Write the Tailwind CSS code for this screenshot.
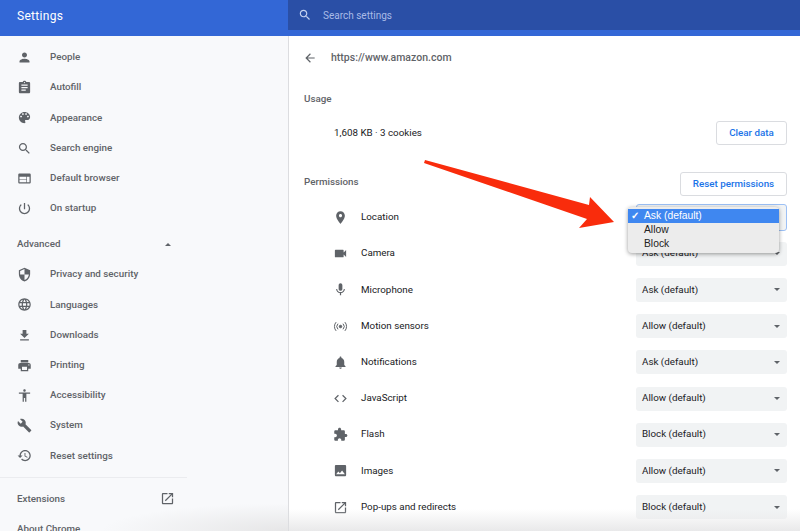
<!DOCTYPE html>
<html lang="en">
<head>
  <meta charset="UTF-8">
  <title>Settings</title>
  <script src="https://cdn.jsdelivr.net/npm/@tailwindcss/browser@4"></script>
</head>
<body class="bg-white font-['Roboto',sans-serif] text-[9.8px] text-[#3c4043] overflow-hidden">
  <div class="relative w-[800px] h-[531px] overflow-hidden flex flex-col">

    <!-- Top bar -->
    <header class="flex h-9 shrink-0 bg-[#3367d6]">
      <div class="w-[288px] pl-[17px] pb-[5px] flex items-center text-white text-[12px] tracking-[0.3px]">Settings</div>
      <div class="flex-1 h-[30px] bg-[#2a4fa6] flex items-center pl-[10px] text-[#a9bbe6]">
        <svg class="w-[14px] h-[14px] fill-[#c5d2f0]" viewBox="0 0 24 24"><path d="M15.5 14h-.79l-.28-.27C15.41 12.59 16 11.11 16 9.5 16 5.91 13.09 3 9.5 3S3 5.91 3 9.5 5.91 16 9.5 16c1.61 0 3.09-.59 4.23-1.57l.27.28v.79l5 4.99L20.49 19l-4.99-5zm-6 0C7.01 14 5 11.99 5 9.5S7.01 5 9.5 5 14 7.01 14 9.5 11.99 14 9.5 14z"/></svg>
        <span class="ml-[11px] text-[10px]">Search settings</span>
      </div>
    </header>

    <div class="flex flex-1 min-h-0">
      <!-- Sidebar -->
      <nav class="w-[289px] shrink-0 bg-[#f8f9fb] border-r border-[#dcdde0] pt-[6.5px] text-[#5f6368] font-medium overflow-hidden">
        <div class="w-[187px]">
          <a class="h-[30.2px] flex items-center"><svg class="w-[15px] h-[15px] ml-[17px] mr-[18px] fill-[#5f6368]" viewBox="0 0 24 24"><path d="M12 12c2.21 0 4-1.79 4-4s-1.79-4-4-4-4 1.79-4 4 1.79 4 4 4zm0 2c-2.67 0-8 1.34-8 4v2h16v-2c0-2.66-5.33-4-8-4z"/></svg>People</a>
          <a class="h-[30.2px] flex items-center"><svg class="w-[15px] h-[15px] ml-[17px] mr-[18px] fill-[#5f6368]" viewBox="0 0 24 24"><path d="M19 3h-4.18C14.4 1.84 13.3 1 12 1c-1.3 0-2.4.84-2.82 2H5c-1.1 0-2 .9-2 2v14c0 1.1.9 2 2 2h14c1.1 0 2-.9 2-2V5c0-1.1-.9-2-2-2zm-7 0c.55 0 1 .45 1 1s-.45 1-1 1-1-.45-1-1 .45-1 1-1zm2 14H7v-2h7v2zm3-4H7v-2h10v2zm0-4H7V7h10v2z"/></svg>Autofill</a>
          <a class="h-[30.2px] flex items-center"><svg class="w-[15px] h-[15px] ml-[17px] mr-[18px] fill-[#5f6368]" viewBox="0 0 24 24"><path d="M12 3c-4.97 0-9 4.03-9 9s4.03 9 9 9c.83 0 1.5-.67 1.5-1.5 0-.39-.15-.74-.39-1.01-.23-.26-.38-.61-.38-.99 0-.83.67-1.5 1.5-1.5H16c2.76 0 5-2.24 5-5 0-4.42-4.03-8-9-8zm-5.5 9c-.83 0-1.5-.67-1.5-1.5S5.67 9 6.5 9 8 9.67 8 10.5 7.33 12 6.5 12zm3-4C8.67 8 8 7.33 8 6.5S8.67 5 9.5 5s1.5.67 1.5 1.5S10.33 8 9.5 8zm5 0c-.83 0-1.5-.67-1.5-1.5S13.67 5 14.5 5s1.5.67 1.5 1.5S15.33 8 14.5 8zm3 4c-.83 0-1.5-.67-1.5-1.5S16.67 9 17.5 9s1.5.67 1.5 1.5-.67 1.5-1.5 1.5z"/></svg>Appearance</a>
          <a class="h-[30.2px] flex items-center"><svg class="w-[15px] h-[15px] ml-[17px] mr-[18px] fill-[#5f6368]" viewBox="0 0 24 24"><path d="M15.5 14h-.79l-.28-.27C15.41 12.59 16 11.11 16 9.5 16 5.91 13.09 3 9.5 3S3 5.91 3 9.5 5.91 16 9.5 16c1.61 0 3.09-.59 4.23-1.57l.27.28v.79l5 4.99L20.49 19l-4.99-5zm-6 0C7.01 14 5 11.99 5 9.5S7.01 5 9.5 5 14 7.01 14 9.5 11.99 14 9.5 14z"/></svg>Search engine</a>
          <a class="h-[30.2px] flex items-center"><svg class="w-[15px] h-[15px] ml-[17px] mr-[18px] fill-[#5f6368]" viewBox="0 0 24 24"><path d="M20 4H4c-1.1 0-1.99.9-1.99 2L2 18c0 1.1.9 2 2 2h16c1.1 0 2-.9 2-2V6c0-1.1-.9-2-2-2zm-5 14H4v-4h11v4zm0-5H4V9h11v4zm5 5h-4V9h4v9z"/></svg>Default browser</a>
          <a class="h-[30.2px] flex items-center"><svg class="w-[15px] h-[15px] ml-[17px] mr-[18px] fill-[#5f6368]" viewBox="0 0 24 24"><path d="M13 3h-2v10h2V3zm4.83 2.17l-1.42 1.42C17.99 7.86 19 9.81 19 12c0 3.87-3.13 7-7 7s-7-3.13-7-7c0-2.19 1.01-4.14 2.58-5.42L6.17 5.17C4.23 6.82 3 9.26 3 12c0 4.97 4.03 9 9 9s9-4.03 9-9c0-2.74-1.23-5.18-3.17-6.83z"/></svg>On startup</a>

          <div class="h-[30px] mt-[6px] pl-[17px] pr-[16px] flex items-center justify-between">
            <span>Advanced</span>
            <span class="w-0 h-0 border-x-[3px] border-x-transparent border-b-[3px] border-b-[#5f6368]"></span>
          </div>

          <a class="h-[30.2px] flex items-center"><svg class="w-[15px] h-[15px] ml-[17px] mr-[18px] fill-[#5f6368]" viewBox="0 0 24 24"><path d="M12 1L3 5v6c0 5.55 3.84 10.74 9 12 5.16-1.26 9-6.45 9-12V5l-9-4zm0 10.99h7c-.53 4.12-3.28 7.79-7 8.94V12H5V6.3l7-3.11v8.8z"/></svg>Privacy and security</a>
          <a class="h-[30.2px] flex items-center"><svg class="w-[15px] h-[15px] ml-[17px] mr-[18px] fill-[#5f6368]" viewBox="0 0 24 24"><path d="M11.99 2C6.47 2 2 6.48 2 12s4.47 10 9.99 10C17.52 22 22 17.52 22 12S17.52 2 11.99 2zm6.93 6h-2.95c-.32-1.25-.78-2.45-1.38-3.56 1.84.63 3.37 1.91 4.33 3.56zM12 4.04c.83 1.2 1.48 2.53 1.91 3.96h-3.82c.43-1.43 1.08-2.76 1.91-3.96zM4.26 14C4.1 13.36 4 12.69 4 12s.1-1.36.26-2h3.38c-.08.66-.14 1.32-.14 2 0 .68.06 1.34.14 2H4.26zm.82 2h2.95c.32 1.25.78 2.45 1.38 3.56-1.84-.63-3.37-1.9-4.33-3.56zm2.95-8H5.08c.96-1.66 2.49-2.93 4.33-3.56C8.81 5.55 8.35 6.75 8.03 8zM12 19.96c-.83-1.2-1.48-2.53-1.91-3.96h3.82c-.43 1.43-1.08 2.76-1.91 3.96zM14.34 14H9.66c-.09-.66-.16-1.32-.16-2 0-.68.07-1.35.16-2h4.68c.09.65.16 1.32.16 2 0 .68-.07 1.34-.16 2zm.25 5.56c.6-1.11 1.06-2.31 1.38-3.56h2.95c-.96 1.65-2.49 2.93-4.33 3.56zM16.36 14c.08-.66.14-1.32.14-2 0-.68-.06-1.34-.14-2h3.38c.16.64.26 1.31.26 2s-.1 1.36-.26 2h-3.38z"/></svg>Languages</a>
          <a class="h-[30.2px] flex items-center"><svg class="w-[15px] h-[15px] ml-[17px] mr-[18px] fill-[#5f6368]" viewBox="0 0 24 24"><path d="M19 9h-4V3H9v6H5l7 7 7-7zM5 18v2h14v-2H5z"/></svg>Downloads</a>
          <a class="h-[30.2px] flex items-center"><svg class="w-[15px] h-[15px] ml-[17px] mr-[18px] fill-[#5f6368]" viewBox="0 0 24 24"><path d="M19 8H5c-1.66 0-3 1.34-3 3v6h4v4h12v-4h4v-6c0-1.66-1.34-3-3-3zm-3 11H8v-5h8v5zm3-7c-.55 0-1-.45-1-1s.45-1 1-1 1 .45 1 1-.45 1-1 1zm-1-9H6v4h12V3z"/></svg>Printing</a>
          <a class="h-[30.2px] flex items-center"><svg class="w-[15px] h-[15px] ml-[17px] mr-[18px] fill-[#5f6368]" viewBox="0 0 24 24"><path d="M12 2c1.1 0 2 .9 2 2s-.9 2-2 2-2-.9-2-2 .9-2 2-2zm9 7h-6v13h-2v-6h-2v6H9V9H3V7h18v2z"/></svg>Accessibility</a>
          <a class="h-[30.2px] flex items-center"><svg class="w-[15px] h-[15px] ml-[17px] mr-[18px] fill-[#5f6368]" viewBox="0 0 24 24"><path d="M22.7 19l-9.1-9.1c.9-2.3.4-5-1.5-6.9-2-2-5-2.4-7.4-1.3L9 6 6 9 1.6 4.7C.4 7.1.9 10.1 2.9 12.1c1.9 1.9 4.6 2.4 6.9 1.5l9.1 9.1c.4.4 1 .4 1.4 0l2.3-2.3c.5-.4.5-1.1.1-1.4z"/></svg>System</a>
          <a class="h-[30.2px] flex items-center"><svg class="w-[15px] h-[15px] ml-[17px] mr-[18px] fill-[#5f6368]" viewBox="0 0 24 24"><path d="M13 3c-4.97 0-9 4.03-9 9H1l3.89 3.89.07.14L9 12H6c0-3.87 3.13-7 7-7s7 3.13 7 7-3.13 7-7 7c-1.93 0-3.68-.79-4.94-2.06l-1.42 1.42C8.27 19.99 10.51 21 13 21c4.97 0 9-4.03 9-9s-4.03-9-9-9zm-1 5v5l4.28 2.54.72-1.21-3.5-2.08V8H12z"/></svg>Reset settings</a>

          <div class="mt-[6px] border-t border-[#ebecef]"></div>
          <a class="h-[42px] pl-[17px] pr-[12px] flex items-center justify-between">Extensions
            <svg class="w-[15px] h-[15px] fill-[#5f6368]" viewBox="0 0 24 24"><path d="M19 19H5V5h7V3H5c-1.11 0-2 .9-2 2v14c0 1.1.89 2 2 2h14c1.1 0 2-.9 2-2v-7h-2v7zM14 3v2h3.59l-9.83 9.83 1.41 1.41L19 6.41V10h2V3h-7z"/></svg>
          </a>
          <a class="h-[18px] pl-[17px] flex items-center">About Chrome</a>
        </div>
      </nav>

      <!-- Site details -->
      <main class="flex-1 min-w-0 pl-[15px] pr-[13px]">
        <div class="h-[43px] flex items-center font-medium text-[#5f6368] text-[10.5px]">
          <svg class="w-[14px] h-[14px] -ml-px fill-[#5f6368]" viewBox="0 0 24 24"><path d="M20 11H7.83l5.59-5.59L12 4l-8 8 8 8 1.41-1.41L7.83 13H20v-2z"/></svg>
          <span class="ml-[14px]">https://www.amazon.com</span>
        </div>
        <div class="mt-[12px] h-4 flex items-center font-medium text-[#5f6368]">Usage</div>
        <div class="mt-[14px] h-6 flex items-center justify-between">
          <span class="ml-[30px] text-[#202124]">1,608 KB · 3 cookies</span>
          <button class="w-[71px] h-6 bg-white border border-[#dadce0] rounded-[3px] text-[#1a73e8] font-medium">Clear data</button>
        </div>
        <div class="mt-[27px] h-6 flex items-center justify-between">
          <span class="mb-[4px] font-medium text-[#5f6368]">Permissions</span>
          <button class="w-[107px] h-6 bg-white border border-[#dadce0] rounded-[3px] text-[#1a73e8] font-medium">Reset permissions</button>
        </div>

        <div class="mt-[3.5px] text-[#202124]">
          <div class="h-[36.2px] flex items-center justify-between">
            <span class="flex items-center"><svg class="w-[15px] h-[15px] ml-[29px] mr-[13px] fill-[#5f6368]" viewBox="0 0 24 24"><path d="M12 2C8.13 2 5 5.13 5 9c0 5.25 7 13 7 13s7-7.75 7-13c0-3.87-3.13-7-7-7zm0 9.5c-1.38 0-2.5-1.12-2.5-2.5s1.12-2.5 2.5-2.5 2.5 1.12 2.5 2.5-1.12 2.5-2.5 2.5z"/></svg>Location</span>
            <span class="w-[151px] h-[27px] pl-[6px] pr-[7px] bg-[#f1f3f4] border border-[#9cc0f5] rounded-[3px] flex items-center justify-between">Ask (default)<span class="w-0 h-0 border-x-[3px] border-x-transparent border-t-[3px] border-t-[#5f6368]"></span></span>
          </div>
          <div class="h-[36.2px] flex items-center justify-between">
            <span class="flex items-center"><svg class="w-[15px] h-[15px] ml-[29px] mr-[13px] fill-[#5f6368]" viewBox="0 0 24 24"><path d="M17 10.5V7c0-.55-.45-1-1-1H4c-.55 0-1 .45-1 1v10c0 .55.45 1 1 1h12c.55 0 1-.45 1-1v-3.5l4 4v-11l-4 4z"/></svg>Camera</span>
            <span class="w-[151px] h-6 pl-[6px] pr-[7px] bg-[#f1f3f4] rounded-[3px] flex items-center justify-between">Ask (default)<span class="w-0 h-0 border-x-[3px] border-x-transparent border-t-[3px] border-t-[#5f6368]"></span></span>
          </div>
          <div class="h-[36.2px] flex items-center justify-between">
            <span class="flex items-center"><svg class="w-[15px] h-[15px] ml-[29px] mr-[13px] fill-[#5f6368]" viewBox="0 0 24 24"><path d="M12 14c1.66 0 2.99-1.34 2.99-3L15 5c0-1.66-1.34-3-3-3S9 3.34 9 5v6c0 1.66 1.34 3 3 3zm5.3-3c0 3-2.54 5.1-5.3 5.1S6.7 14 6.7 11H5c0 3.41 2.72 6.23 6 6.72V21h2v-3.28c3.28-.48 6-3.3 6-6.72h-1.7z"/></svg>Microphone</span>
            <span class="w-[151px] h-6 pl-[6px] pr-[7px] bg-[#f1f3f4] rounded-[3px] flex items-center justify-between">Ask (default)<span class="w-0 h-0 border-x-[3px] border-x-transparent border-t-[3px] border-t-[#5f6368]"></span></span>
          </div>
          <div class="h-[36.2px] flex items-center justify-between">
            <span class="flex items-center"><svg class="w-[15px] h-[15px] ml-[29px] mr-[13px] fill-none stroke-[#5f6368] stroke-[1.6]" viewBox="0 0 24 24"><circle cx="12" cy="12" r="2" class="fill-[#5f6368]"/><path d="M8 7.5a6.5 6.5 0 0 0 0 9M16 7.5a6.5 6.5 0 0 1 0 9M5 5a10.5 10.5 0 0 0 0 14M19 5a10.5 10.5 0 0 1 0 14"/></svg>Motion sensors</span>
            <span class="w-[151px] h-6 pl-[6px] pr-[7px] bg-[#f1f3f4] rounded-[3px] flex items-center justify-between">Allow (default)<span class="w-0 h-0 border-x-[3px] border-x-transparent border-t-[3px] border-t-[#5f6368]"></span></span>
          </div>
          <div class="h-[36.2px] flex items-center justify-between">
            <span class="flex items-center"><svg class="w-[15px] h-[15px] ml-[29px] mr-[13px] fill-[#5f6368]" viewBox="0 0 24 24"><path d="M12 22c1.1 0 2-.9 2-2h-4c0 1.1.89 2 2 2zm6-6v-5c0-3.07-1.64-5.64-4.5-6.32V4c0-.83-.67-1.5-1.5-1.5s-1.5.67-1.5 1.5v.68C7.63 5.36 6 7.92 6 11v5l-2 2v1h16v-1l-2-2z"/></svg>Notifications</span>
            <span class="w-[151px] h-6 pl-[6px] pr-[7px] bg-[#f1f3f4] rounded-[3px] flex items-center justify-between">Ask (default)<span class="w-0 h-0 border-x-[3px] border-x-transparent border-t-[3px] border-t-[#5f6368]"></span></span>
          </div>
          <div class="h-[36.2px] flex items-center justify-between">
            <span class="flex items-center"><svg class="w-[15px] h-[15px] ml-[29px] mr-[13px] fill-[#5f6368]" viewBox="0 0 24 24"><path d="M9.4 16.6L4.8 12l4.6-4.6L8 6l-6 6 6 6 1.4-1.4zm5.2 0l4.6-4.6-4.6-4.6L16 6l6 6-6 6-1.4-1.4z"/></svg>JavaScript</span>
            <span class="w-[151px] h-6 pl-[6px] pr-[7px] bg-[#f1f3f4] rounded-[3px] flex items-center justify-between">Allow (default)<span class="w-0 h-0 border-x-[3px] border-x-transparent border-t-[3px] border-t-[#5f6368]"></span></span>
          </div>
          <div class="h-[36.2px] flex items-center justify-between">
            <span class="flex items-center"><svg class="w-[15px] h-[15px] ml-[29px] mr-[13px] fill-[#5f6368]" viewBox="0 0 24 24"><path d="M20.5 11H19V7c0-1.1-.9-2-2-2h-4V3.5C13 2.12 11.88 1 10.5 1S8 2.12 8 3.5V5H4c-1.1 0-1.99.9-1.99 2v3.8H3.5c1.49 0 2.7 1.21 2.7 2.7s-1.21 2.7-2.7 2.7H2V20c0 1.1.9 2 2 2h3.8v-1.5c0-1.49 1.21-2.7 2.7-2.7 1.49 0 2.7 1.21 2.7 2.7V22H17c1.1 0 2-.9 2-2v-4h1.5c1.38 0 2.5-1.12 2.5-2.5S21.88 11 20.5 11z"/></svg>Flash</span>
            <span class="w-[151px] h-6 pl-[6px] pr-[7px] bg-[#f1f3f4] rounded-[3px] flex items-center justify-between">Block (default)<span class="w-0 h-0 border-x-[3px] border-x-transparent border-t-[3px] border-t-[#5f6368]"></span></span>
          </div>
          <div class="h-[36.2px] flex items-center justify-between">
            <span class="flex items-center"><svg class="w-[15px] h-[15px] ml-[29px] mr-[13px] fill-[#5f6368]" viewBox="0 0 24 24"><path d="M21 19V5c0-1.1-.9-2-2-2H5c-1.1 0-2 .9-2 2v14c0 1.1.9 2 2 2h14c1.1 0 2-.9 2-2zM8.5 13.5l2.5 3.01L14.5 12l4.5 6H5l3.5-4.5z"/></svg>Images</span>
            <span class="w-[151px] h-6 pl-[6px] pr-[7px] bg-[#f1f3f4] rounded-[3px] flex items-center justify-between">Allow (default)<span class="w-0 h-0 border-x-[3px] border-x-transparent border-t-[3px] border-t-[#5f6368]"></span></span>
          </div>
          <div class="h-[36.2px] flex items-center justify-between">
            <span class="flex items-center"><svg class="w-[15px] h-[15px] ml-[29px] mr-[13px] fill-[#5f6368]" viewBox="0 0 24 24"><path d="M19 19H5V5h7V3H5c-1.11 0-2 .9-2 2v14c0 1.1.89 2 2 2h14c1.1 0 2-.9 2-2v-7h-2v7zM14 3v2h3.59l-9.83 9.83 1.41 1.41L19 6.41V10h2V3h-7z"/></svg>Pop-ups and redirects</span>
            <span class="w-[151px] h-6 pl-[6px] pr-[7px] bg-[#f1f3f4] rounded-[3px] flex items-center justify-between">Block (default)<span class="w-0 h-0 border-x-[3px] border-x-transparent border-t-[3px] border-t-[#5f6368]"></span></span>
          </div>
        </div>
      </main>
    </div>

    <!-- Open native select menu over the Location row -->
    <div class="absolute left-[628px] top-[207px] w-[151px] h-[46px] py-[2px] bg-[#ececec] rounded-[4px] shadow-[0_1px_4px_rgba(0,0,0,0.4)] font-['Liberation_Sans',sans-serif] text-[10.3px] leading-[13.5px] text-[#222]">
      <div class="h-[14px] pl-[16px] bg-[#3f87f0] text-white relative"><span class="absolute left-[3px] text-[10px] font-bold">✓</span>Ask (default)</div>
      <div class="h-[13.5px] pl-[16px]">Allow</div>
      <div class="h-[13.5px] pl-[16px]">Block</div>
    </div>

    <!-- Red annotation arrow -->
    <svg class="absolute left-0 top-0 w-[800px] h-[531px] pointer-events-none" viewBox="0 0 800 531"><polygon points="425,160 589,205 590,197 614,222 579,228 587,219 424,163" fill="#f92c0c"/></svg>

    <!-- Bottom fade of the window shadow -->
    <div class="absolute left-[100px] w-[188px] bottom-0 h-[28px] bg-[radial-gradient(ellipse_at_bottom_right,#e6e6e7,transparent_70%)] pointer-events-none"></div>
    <div class="absolute left-[289px] right-0 bottom-0 h-[22px] bg-gradient-to-b from-transparent to-[#e9e9ea] pointer-events-none"></div>
  </div>
</body>
</html>
